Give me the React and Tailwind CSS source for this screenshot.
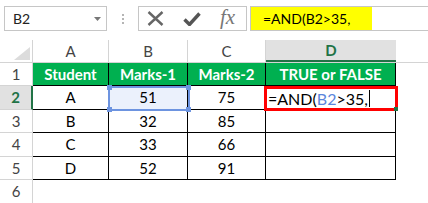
import React from 'react';

const cols = [
  { key: 'A', w: 'w-[76px]' },
  { key: 'B', w: 'w-[79px]' },
  { key: 'C', w: 'w-[78px]' },
  { key: 'D', w: 'w-[130px]' },
];

const rows = [
  { n: 1, h: 'h-[23px]', cells: ['Student', 'Marks-1', 'Marks-2', 'TRUE or FALSE'], head: true },
  { n: 2, h: 'h-[24px]', cells: ['A', '51', '75', ''] },
  { n: 3, h: 'h-[23px]', cells: ['B', '32', '85', ''] },
  { n: 4, h: 'h-[24px]', cells: ['C', '33', '66', ''] },
  { n: 5, h: 'h-[23px]', cells: ['D', '52', '91', ''] },
];

function Handle({ className }) {
  return <div className={`absolute w-[5px] h-[5px] bg-[#6d94e0] ${className}`} />;
}

export default function App() {
  return (
    <div className="w-[428px] h-[203px] bg-white overflow-hidden font-['Lato',sans-serif] text-[#222] relative">
      {/* Formula bar */}
      <div className="h-[40px] flex items-start pt-[6px] pl-[4px]">
        <div className="w-[103px] h-[25px] border border-[#c6c6c6] flex items-center justify-between pl-[8px] pr-[5px] text-[14px]">
          <span>B2</span>
          <svg width="7" height="4" viewBox="0 0 7 4"><path d="M0 0h7L3.5 4z" fill="#777" /></svg>
        </div>
        <div className="w-[31px] h-[25px] flex flex-col items-center justify-center gap-[2px]">
          <div className="w-[2px] h-[2px] bg-[#b5b5b5]" />
          <div className="w-[2px] h-[2px] bg-[#b5b5b5]" />
          <div className="w-[2px] h-[2px] bg-[#b5b5b5]" />
        </div>
        <div className="w-[109px] h-[25px] border border-[#c6c6c6] flex items-center pl-[8px] gap-[19px]">
          <svg width="17" height="15" viewBox="0 0 17 15">
            <path d="M1.5 1L15.5 14M15.5 1L1.5 14" stroke="#666" strokeWidth="2.4" />
          </svg>
          <svg width="18" height="14" viewBox="0 0 18 14">
            <path d="M1.5 7.5L6.5 12.5L16.5 1.5" stroke="#555" strokeWidth="3.4" fill="none" />
          </svg>
          <span className="font-['Liberation_Serif',serif] italic text-[21px] text-[#777] leading-none -mt-[2px]">fx</span>
        </div>
        <div className="w-[3px]" />
        <div className="flex-1 h-[25px] border-y border-l border-[#c6c6c6] flex items-stretch">
          <div className="w-[121px] bg-[#ffff00] flex items-center pl-[12px] text-[14px] text-black">
            =AND(B2&gt;35,
          </div>
        </div>
      </div>

      {/* Column headers */}
      <div className="flex h-[23px] border-b border-[#d4d4d4]">
        <div className="w-[33px] border-r border-[#d4d4d4] relative">
          <svg className="absolute right-[2px] bottom-[2px]" width="16" height="13" viewBox="0 0 16 13">
            <path d="M16 0V13H0z" fill="#dcdcdc" />
          </svg>
        </div>
        {cols.map((c) =>
          c.key === 'D' ? (
            <div
              key={c.key}
              className={`${c.w} bg-[#e1e1e1] border-b-2 border-[#217346] flex items-center justify-center text-[15px] font-bold text-[#217346]`}
            >
              {c.key}
            </div>
          ) : (
            <div
              key={c.key}
              className={`${c.w} border-r border-[#d4d4d4] flex items-center justify-center text-[15px] text-[#444]`}
            >
              {c.key}
            </div>
          )
        )}
        <div className="flex-1" />
      </div>

      {/* Grid */}
      <div className="relative">
        {rows.map((r) => (
          <div key={r.n} className={`flex ${r.h}`}>
            {r.n === 2 ? (
              <div className="w-[33px] bg-[#e1e1e1] border-r-2 border-[#217346] border-b border-b-[#d4d4d4] flex items-center justify-center text-[15px] font-bold text-[#217346]">
                {r.n}
              </div>
            ) : (
              <div className="w-[33px] border-r border-b border-[#d4d4d4] flex items-center justify-center text-[15px] text-[#444]">
                {r.n}
              </div>
            )}
            {cols.map((c, i) => (
              <div
                key={c.key}
                className={`${c.w} border-r border-b border-black flex items-center justify-center text-[15px] ${
                  r.head ? 'bg-[#00b050] text-white font-bold' : 'text-black'
                } ${r.n === 2 && i === 1 ? 'bg-[#ebf1fc]' : ''}`}
              >
                {r.cells[i]}
              </div>
            ))}
            <div className="flex-1" />
          </div>
        ))}
        <div className="flex h-[23px]">
          <div className="w-[33px] border-r border-[#d4d4d4] flex items-center justify-center text-[15px] text-[#444]">6</div>
          <div className="flex-1" />
        </div>

        {/* B2 reference highlight */}
        <div className="absolute left-[108px] top-[23px] w-[82px] h-[25px] border-2 border-[#6d94e0]">
          <Handle className="-left-[3px] -top-[3px]" />
          <Handle className="-right-[3px] -top-[3px]" />
          <Handle className="-left-[3px] -bottom-[3px]" />
          <Handle className="-right-[3px] -bottom-[3px]" />
        </div>

        {/* D2 editing cell */}
        <div className="absolute left-[264px] top-[23px] w-[134px] h-[25px] border-[3px] border-[#ff0000] flex items-center pl-[1px] text-[16px] text-black">
          <span>=AND(</span>
          <span className="text-[#5b86dc]">B2</span>
          <span>&gt;35,</span>
          <span className="w-[1px] h-[17px] bg-black ml-[1px]" />
          <div className="absolute -right-[3px] -bottom-[3px] w-[4px] h-[4px] bg-[#217346]" />
        </div>
      </div>
    </div>
  );
}
